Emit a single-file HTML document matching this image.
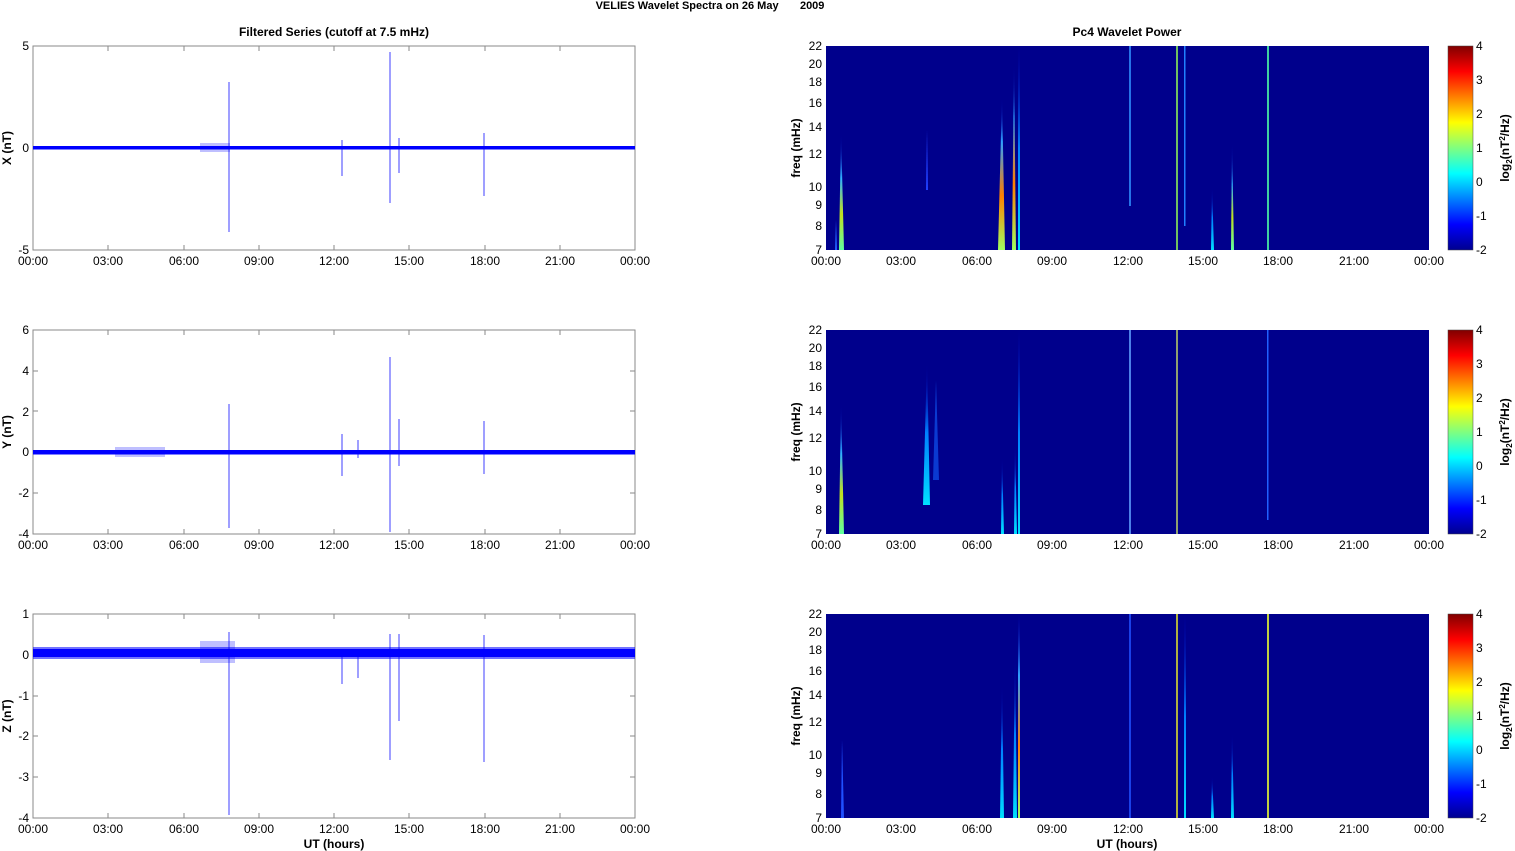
<!DOCTYPE html>
<html><head><meta charset="utf-8"><style>
html,body{margin:0;padding:0;background:#fff;width:1515px;height:851px;overflow:hidden}
svg{display:block;font-family:"Liberation Sans",Arial,sans-serif;font-size:12px}
.b{font-weight:bold}
.ax{fill:none;stroke:#8a8a8a;stroke-width:1}
.tk{stroke:#8a8a8a;stroke-width:1;fill:none}
.sp{stroke:#0000ff;stroke-width:1;opacity:.75}
</style></head><body>
<svg width="1515" height="851" viewBox="0 0 1515 851" xmlns="http://www.w3.org/2000/svg">
<defs>
<linearGradient id="jet" x1="0" y1="1" x2="0" y2="0">
<stop offset="0" stop-color="#00008f"/><stop offset=".125" stop-color="#0000ff"/><stop offset=".375" stop-color="#00ffff"/><stop offset=".625" stop-color="#ffff00"/><stop offset=".875" stop-color="#ff0000"/><stop offset="1" stop-color="#800000"/>
</linearGradient>
<linearGradient id="gc" x1="0" y1="1" x2="0" y2="0"><stop offset="0" stop-color="#00e0ff"/><stop offset=".5" stop-color="#0080ff"/><stop offset="1" stop-color="#0000c0" stop-opacity="0"/></linearGradient>
<linearGradient id="gy" x1="0" y1="1" x2="0" y2="0"><stop offset="0" stop-color="#60ffa0"/><stop offset=".3" stop-color="#c0e020"/><stop offset=".6" stop-color="#30b0ff"/><stop offset="1" stop-color="#0000c0" stop-opacity="0"/></linearGradient>
<linearGradient id="gr" x1="0" y1="1" x2="0" y2="0"><stop offset="0" stop-color="#a0ff60"/><stop offset=".35" stop-color="#ff8000"/><stop offset=".7" stop-color="#30a0ff"/><stop offset="1" stop-color="#0000c0" stop-opacity="0"/></linearGradient>
</defs>

<text x="710" y="9" text-anchor="middle" class="b" font-size="11">VELIES Wavelet Spectra on 26 May&#160;&#160;&#160;&#160;&#160;&#160;&#160;2009</text>
<text x="334" y="36" text-anchor="middle" class="b">Filtered Series (cutoff at 7.5 mHz)</text>
<text x="1127" y="36" text-anchor="middle" class="b">Pc4 Wavelet Power</text>

<!-- tick marks left -->
<path class="tk" d="M108 46v5M184 46v5M259 46v5M334 46v5M409 46v5M485 46v5M560 46v5M108 250v-5M184 250v-5M259 250v-5M334 250v-5M409 250v-5M485 250v-5M560 250v-5M33 148h5M635 148h-5
M108 330v5M184 330v5M259 330v5M334 330v5M409 330v5M485 330v5M560 330v5M108 534v-5M184 534v-5M259 534v-5M334 534v-5M409 534v-5M485 534v-5M560 534v-5M33 371h5M33 411h5M33 452h5M33 493h5M635 371h-5M635 411h-5M635 452h-5M635 493h-5
M108 614v5M184 614v5M259 614v5M334 614v5M409 614v5M485 614v5M560 614v5M108 818v-5M184 818v-5M259 818v-5M334 818v-5M409 818v-5M485 818v-5M560 818v-5M33 655h5M33 696h5M33 736h5M33 777h5M635 655h-5M635 696h-5M635 736h-5M635 777h-5"/>

<!-- LEFT PANEL 1 -->
<g>
<rect x="33" y="46" width="602" height="204" class="ax"/>
<rect x="33" y="146" width="602" height="3.5" fill="#0000ff"/>
<rect x="200" y="143" width="30" height="9" fill="#0000ff" opacity=".25"/>
<line x1="229" y1="82" x2="229" y2="232" class="sp"/>
<line x1="390" y1="52" x2="390" y2="203" class="sp"/>
<line x1="342" y1="140" x2="342" y2="176" class="sp"/>
<line x1="399" y1="138" x2="399" y2="173" class="sp"/>
<line x1="484" y1="133" x2="484" y2="196" class="sp"/>
<text x="29" y="50" text-anchor="end">5</text><text x="29" y="152" text-anchor="end">0</text><text x="29" y="254" text-anchor="end">-5</text>
<text transform="translate(11,148) rotate(-90)" text-anchor="middle" class="b">X (nT)</text>
</g>
<!-- LEFT PANEL 2 -->
<g>
<rect x="33" y="330" width="602" height="204" class="ax"/>
<rect x="33" y="450" width="602" height="4.5" fill="#0000ff"/>
<rect x="115" y="447" width="50" height="10" fill="#0000ff" opacity=".25"/>
<line x1="229" y1="404" x2="229" y2="528" class="sp"/>
<line x1="390" y1="357" x2="390" y2="532" class="sp"/>
<line x1="342" y1="434" x2="342" y2="476" class="sp"/>
<line x1="358" y1="440" x2="358" y2="458" class="sp"/>
<line x1="399" y1="419" x2="399" y2="466" class="sp"/>
<line x1="484" y1="421" x2="484" y2="474" class="sp"/>
<text x="29" y="334" text-anchor="end">6</text><text x="29" y="375" text-anchor="end">4</text><text x="29" y="416" text-anchor="end">2</text><text x="29" y="456" text-anchor="end">0</text><text x="29" y="497" text-anchor="end">-2</text><text x="29" y="538" text-anchor="end">-4</text>
<text transform="translate(11,432) rotate(-90)" text-anchor="middle" class="b">Y (nT)</text>
</g>
<!-- LEFT PANEL 3 -->
<g>
<rect x="33" y="614" width="602" height="204" class="ax"/>
<rect x="33" y="647" width="602" height="12" fill="#0000ff" opacity=".55"/>
<rect x="33" y="649" width="602" height="8" fill="#0000ff"/>
<rect x="200" y="641" width="35" height="22" fill="#0000ff" opacity=".25"/>
<line x1="229" y1="632" x2="229" y2="815" class="sp"/>
<line x1="390" y1="634" x2="390" y2="760" class="sp"/>
<line x1="342" y1="650" x2="342" y2="684" class="sp"/>
<line x1="358" y1="650" x2="358" y2="678" class="sp"/>
<line x1="399" y1="634" x2="399" y2="721" class="sp"/>
<line x1="484" y1="635" x2="484" y2="762" class="sp"/>
<text x="29" y="618" text-anchor="end">1</text><text x="29" y="659" text-anchor="end">0</text><text x="29" y="700" text-anchor="end">-1</text><text x="29" y="740" text-anchor="end">-2</text><text x="29" y="781" text-anchor="end">-3</text><text x="29" y="822" text-anchor="end">-4</text>
<text transform="translate(11,716) rotate(-90)" text-anchor="middle" class="b">Z (nT)</text>
<text x="334" y="848" text-anchor="middle" class="b">UT (hours)</text>
</g>
<!-- left x ticks labels -->
<g text-anchor="middle">
<text x="33" y="265">00:00</text><text x="108" y="265">03:00</text><text x="184" y="265">06:00</text><text x="259" y="265">09:00</text><text x="334" y="265">12:00</text><text x="409" y="265">15:00</text><text x="485" y="265">18:00</text><text x="560" y="265">21:00</text><text x="635" y="265">00:00</text>
<text x="33" y="549">00:00</text><text x="108" y="549">03:00</text><text x="184" y="549">06:00</text><text x="259" y="549">09:00</text><text x="334" y="549">12:00</text><text x="409" y="549">15:00</text><text x="485" y="549">18:00</text><text x="560" y="549">21:00</text><text x="635" y="549">00:00</text>
<text x="33" y="833">00:00</text><text x="108" y="833">03:00</text><text x="184" y="833">06:00</text><text x="259" y="833">09:00</text><text x="334" y="833">12:00</text><text x="409" y="833">15:00</text><text x="485" y="833">18:00</text><text x="560" y="833">21:00</text><text x="635" y="833">00:00</text>
</g>

<!-- RIGHT PANEL 1 -->
<g>
<rect x="826" y="46" width="603" height="204" fill="#00008c"/>
<path d="M839 250 L841 130 L844 250Z" fill="url(#gy)"/>
<path d="M835 250 L836 220 L837 250Z" fill="#2060ff"/>
<path d="M998 250 L1002 95 L1005 250Z" fill="url(#gr)"/>
<path d="M1012 250 L1014 60 L1016 250Z" fill="url(#gr)"/>
<rect x="1018" y="46" width="2" height="204" fill="url(#gc)"/>
<rect x="1129" y="46" width="2" height="160" fill="#3090ff" opacity=".8"/>
<rect x="1176" y="46" width="2" height="204" fill="#70c060"/>
<rect x="1184" y="46" width="1.5" height="180" fill="#2080ff"/>
<path d="M1211 250 L1212 185 L1214 250Z" fill="url(#gc)"/>
<path d="M1231 250 L1232 140 L1234 250Z" fill="url(#gy)"/>
<rect x="1267" y="46" width="2" height="204" fill="#40d0a0"/>
<path d="M926 190 L927 130 L928 190Z" fill="#2040ff"/>
</g>
<!-- RIGHT PANEL 2 -->
<g>
<rect x="826" y="330" width="603" height="204" fill="#00008c"/>
<path d="M839 534 L841 400 L844 534Z" fill="url(#gy)"/>
<path d="M923 505 L927 360 L930 505Z" fill="url(#gc)"/>
<path d="M933 480 L936 380 L939 480Z" fill="#1060ff" opacity=".6"/>
<path d="M1001 534 L1002 455 L1004 534Z" fill="url(#gc)"/>
<path d="M1014 534 L1015 440 L1017 534Z" fill="url(#gc)"/>
<rect x="1018" y="330" width="2" height="204" fill="url(#gc)"/>
<rect x="1129" y="330" width="2" height="204" fill="#60a0ff" opacity=".8"/>
<rect x="1176" y="330" width="2" height="204" fill="#90a070"/>
<rect x="1267" y="330" width="1.5" height="190" fill="#2060ff"/>
</g>
<!-- RIGHT PANEL 3 -->
<g>
<rect x="826" y="614" width="603" height="204" fill="#00008c"/>
<path d="M841 818 L842 740 L844 818Z" fill="#2050ff"/>
<path d="M1000 818 L1002 680 L1004 818Z" fill="url(#gc)"/>
<path d="M1013 818 L1015 650 L1017 818Z" fill="url(#gc)"/>
<rect x="1018" y="614" width="2" height="204" fill="url(#gr)"/>
<rect x="1129" y="614" width="2" height="204" fill="#2050ff" opacity=".8"/>
<rect x="1176" y="614" width="2" height="204" fill="#b0b040"/>
<rect x="1184" y="614" width="2" height="204" fill="url(#gc)"/>
<path d="M1211 818 L1212 775 L1214 818Z" fill="url(#gc)"/>
<path d="M1231 818 L1232 730 L1234 818Z" fill="url(#gc)"/>
<rect x="1267" y="614" width="2" height="204" fill="#c0d040"/>
<text x="1127" y="848" text-anchor="middle" class="b">UT (hours)</text>
</g>
<!-- right freq labels -->
<g text-anchor="end">
<text x="822" y="50">22</text><text x="822" y="68">20</text><text x="822" y="86">18</text><text x="822" y="107">16</text><text x="822" y="131">14</text><text x="822" y="158">12</text><text x="822" y="191">10</text><text x="822" y="209">9</text><text x="822" y="230">8</text><text x="822" y="254">7</text>
<text x="822" y="334">22</text><text x="822" y="352">20</text><text x="822" y="370">18</text><text x="822" y="391">16</text><text x="822" y="415">14</text><text x="822" y="442">12</text><text x="822" y="475">10</text><text x="822" y="493">9</text><text x="822" y="514">8</text><text x="822" y="538">7</text>
<text x="822" y="618">22</text><text x="822" y="636">20</text><text x="822" y="654">18</text><text x="822" y="675">16</text><text x="822" y="699">14</text><text x="822" y="726">12</text><text x="822" y="759">10</text><text x="822" y="777">9</text><text x="822" y="798">8</text><text x="822" y="822">7</text>
</g>
<text transform="translate(800,148) rotate(-90)" text-anchor="middle" class="b">freq (mHz)</text>
<text transform="translate(800,432) rotate(-90)" text-anchor="middle" class="b">freq (mHz)</text>
<text transform="translate(800,716) rotate(-90)" text-anchor="middle" class="b">freq (mHz)</text>
<g text-anchor="middle">
<text x="826" y="265">00:00</text><text x="901" y="265">03:00</text><text x="977" y="265">06:00</text><text x="1052" y="265">09:00</text><text x="1128" y="265">12:00</text><text x="1203" y="265">15:00</text><text x="1278" y="265">18:00</text><text x="1354" y="265">21:00</text><text x="1429" y="265">00:00</text>
<text x="826" y="549">00:00</text><text x="901" y="549">03:00</text><text x="977" y="549">06:00</text><text x="1052" y="549">09:00</text><text x="1128" y="549">12:00</text><text x="1203" y="549">15:00</text><text x="1278" y="549">18:00</text><text x="1354" y="549">21:00</text><text x="1429" y="549">00:00</text>
<text x="826" y="833">00:00</text><text x="901" y="833">03:00</text><text x="977" y="833">06:00</text><text x="1052" y="833">09:00</text><text x="1128" y="833">12:00</text><text x="1203" y="833">15:00</text><text x="1278" y="833">18:00</text><text x="1354" y="833">21:00</text><text x="1429" y="833">00:00</text>
</g>
<!-- colorbars -->
<rect x="1448" y="46" width="25" height="204" fill="url(#jet)" stroke="#444" stroke-width=".5"/>
<rect x="1448" y="330" width="25" height="204" fill="url(#jet)" stroke="#444" stroke-width=".5"/>
<rect x="1448" y="614" width="25" height="204" fill="url(#jet)" stroke="#444" stroke-width=".5"/>
<g>
<text x="1476" y="50">4</text><text x="1476" y="84">3</text><text x="1476" y="118">2</text><text x="1476" y="152">1</text><text x="1476" y="186">0</text><text x="1476" y="220">-1</text><text x="1476" y="254">-2</text>
<text x="1476" y="334">4</text><text x="1476" y="368">3</text><text x="1476" y="402">2</text><text x="1476" y="436">1</text><text x="1476" y="470">0</text><text x="1476" y="504">-1</text><text x="1476" y="538">-2</text>
<text x="1476" y="618">4</text><text x="1476" y="652">3</text><text x="1476" y="686">2</text><text x="1476" y="720">1</text><text x="1476" y="754">0</text><text x="1476" y="788">-1</text><text x="1476" y="822">-2</text>
</g>
<text transform="translate(1509,148) rotate(-90)" text-anchor="middle" class="b">log<tspan font-size="8" dy="3">2</tspan><tspan dy="-3">(nT</tspan><tspan font-size="8" dy="-4">2</tspan><tspan dy="4">/Hz)</tspan></text>
<text transform="translate(1509,432) rotate(-90)" text-anchor="middle" class="b">log<tspan font-size="8" dy="3">2</tspan><tspan dy="-3">(nT</tspan><tspan font-size="8" dy="-4">2</tspan><tspan dy="4">/Hz)</tspan></text>
<text transform="translate(1509,716) rotate(-90)" text-anchor="middle" class="b">log<tspan font-size="8" dy="3">2</tspan><tspan dy="-3">(nT</tspan><tspan font-size="8" dy="-4">2</tspan><tspan dy="4">/Hz)</tspan></text>
</svg>
</body></html>
